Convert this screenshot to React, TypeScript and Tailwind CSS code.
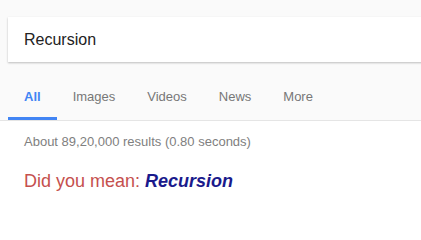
export default function App() {
  const tabs = ['All', 'Images', 'Videos', 'News', 'More'];

  return (
    <div className="w-[421px] h-[205px] overflow-hidden bg-white font-['Liberation_Sans',Arial,sans-serif]">
      {/* header */}
      <div className="bg-[#fafafa] pt-[17px] border-b border-[#e5e5e5]">
        <div className="ml-2 h-[45px] w-[440px] bg-white shadow-[0_1px_2px_rgba(0,0,0,0.25)] flex items-center pl-4 text-[16px] text-[#222]">
          Recursion
        </div>

        <div className="flex ml-2">
          {tabs.map((t, i) => (
            <div
              key={t}
              className={
                i === 0
                  ? 'px-4 pt-[27px] pb-[13px] leading-[15px] text-[13px] font-bold text-[#4285f4] border-b-[3px] border-[#4285f4]'
                  : 'px-4 pt-[27px] pb-[13px] leading-[15px] text-[13px] text-[#777] border-b-[3px] border-transparent'
              }
            >
              {t}
            </div>
          ))}
        </div>
      </div>

      {/* results */}
      <div className="pl-6">
        <div className="mt-[13px] text-[13px] leading-[15px] text-[#808080]">
          About 89,20,000 results (0.80 seconds)
        </div>
        <div className="mt-[22px] text-[18px] leading-[21px] text-[#c5504e]">
          Did you mean:{' '}
          <span className="font-bold italic text-[#1a1a8c]">Recursion</span>
        </div>
      </div>
    </div>
  );
}
